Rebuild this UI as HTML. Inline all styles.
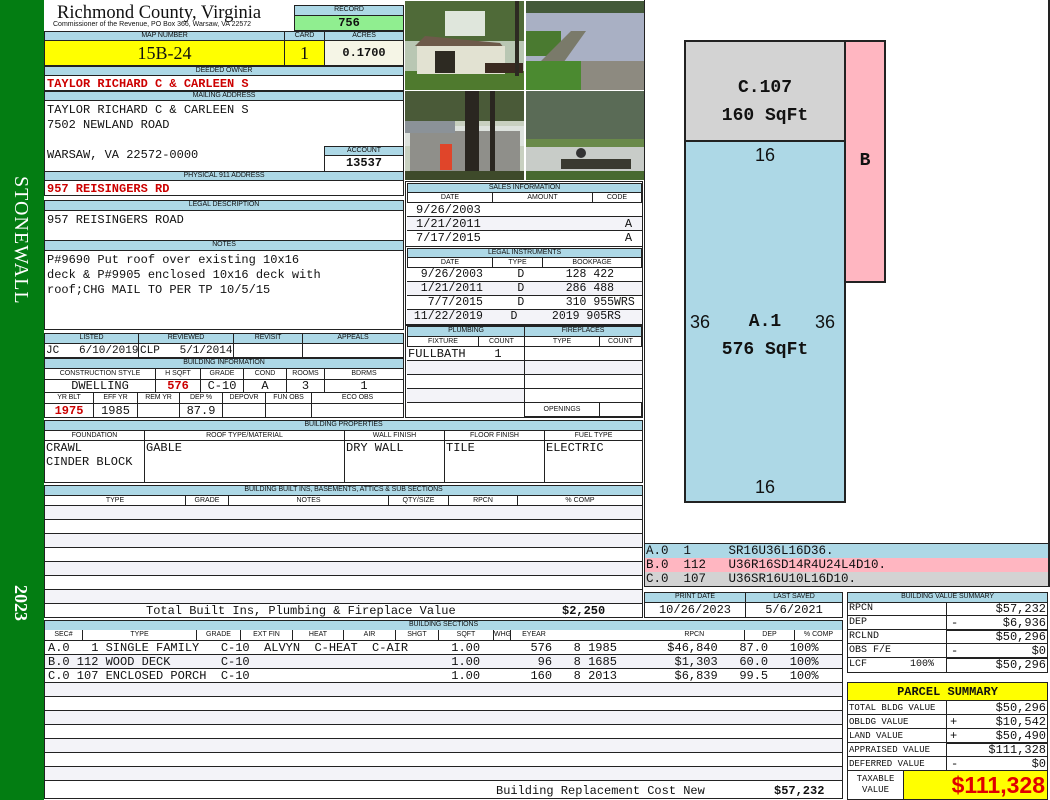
<!DOCTYPE html>
<html><head><meta charset="utf-8">
<style>
*{box-sizing:border-box;margin:0;padding:0}
body{width:1050px;height:800px;position:relative;background:#fff;overflow:hidden;font-family:"Liberation Mono",monospace;color:#111}
div{position:absolute}
.h{background:#add8e6;border:1px solid #222;font:7px/8px "Liberation Sans",sans-serif;text-align:center;color:#111;letter-spacing:-0.1px}
.b{border:1px solid #222;background:#fff}
.m{font-family:"Liberation Mono",monospace;font-size:12px;line-height:14px;white-space:pre}
.r{color:#c00;font-weight:bold}
.l{border-bottom:1px solid #222}
.s{font:7px/10px "Liberation Sans",sans-serif;text-align:center}
.st{background:#f3f3f8}
.bh{top:630px;height:11px;border:1px solid #222;border-top:0;font:7px/10px 'Liberation Sans',sans-serif;text-align:center;background:#fff}
</style></head><body>

<div style="left:0;top:0;width:44px;height:800px;background:#037d12"></div>
<div style="left:6px;top:165px;width:30px;height:150px;color:#fff;font:20px/30px 'Liberation Serif',serif;writing-mode:vertical-rl;text-align:center;letter-spacing:1px">STONEWALL</div>
<div style="left:6px;top:585px;width:30px;height:45px;color:#fff;font:bold 18px/30px 'Liberation Serif',serif;writing-mode:vertical-rl">2023</div>

<div style="left:57px;top:2px;font:18.5px/22px 'Liberation Serif',serif">Richmond County, Virginia</div>
<div style="left:53px;top:21px;font:7px/8px 'Liberation Sans',sans-serif;white-space:nowrap">Commissioner of the Revenue, PO Box 366, Warsaw, VA 22572</div>
<div class="h" style="left:294px;top:5px;width:110px;height:11px">RECORD</div>
<div class="b" style="left:294px;top:15px;width:110px;height:16px;background:#90ee90;font:bold 12px/14px 'Liberation Mono';text-align:center">756</div>

<div class="h" style="left:44px;top:31px;width:241px;height:10px">MAP NUMBER</div>
<div class="h" style="left:284px;top:31px;width:41px;height:10px">CARD</div>
<div class="h" style="left:324px;top:31px;width:80px;height:10px">ACRES</div>
<div class="b" style="left:44px;top:40px;width:241px;height:26px;background:#ffff00;font:18px/24px 'Liberation Serif',serif;text-align:center">15B-24</div>
<div class="b" style="left:284px;top:40px;width:41px;height:26px;background:#ffff00;font:18px/24px 'Liberation Serif',serif;text-align:center">1</div>
<div class="b" style="left:324px;top:40px;width:80px;height:26px;background:#f5f5e6;font:bold 12px/24px 'Liberation Mono';text-align:center">0.1700</div>

<div class="h" style="left:44px;top:66px;width:360px;height:10px">DEEDED OWNER</div>
<div class="b m r" style="left:44px;top:75px;width:360px;height:16px;padding-left:2px;line-height:16px">TAYLOR RICHARD C &amp; CARLEEN S</div>
<div class="h" style="left:44px;top:91px;width:360px;height:10px">MAILING ADDRESS</div>
<div class="b m" style="left:44px;top:100px;width:360px;height:72px;padding:2px 0 0 2px;line-height:15px">TAYLOR RICHARD C &amp; CARLEEN S
7502 NEWLAND ROAD

WARSAW, VA 22572-0000</div>
<div class="h" style="left:324px;top:146px;width:80px;height:10px">ACCOUNT</div>
<div class="b" style="left:324px;top:155px;width:80px;height:17px;font:bold 12px/15px 'Liberation Mono';text-align:center">13537</div>
<div class="h" style="left:44px;top:171px;width:360px;height:10px">PHYSICAL 911 ADDRESS</div>
<div class="b m r" style="left:44px;top:180px;width:360px;height:16px;padding-left:2px;line-height:16px">957 REISINGERS RD</div>

<div class="h" style="left:44px;top:200px;width:360px;height:11px">LEGAL DESCRIPTION</div>
<div class="b m" style="left:44px;top:210px;width:360px;height:31px;padding:2px 0 0 2px">957 REISINGERS ROAD</div>
<div class="h" style="left:44px;top:240px;width:360px;height:11px">NOTES</div>
<div class="b m" style="left:44px;top:250px;width:360px;height:80px;padding:2px 0 0 2px;line-height:15px">P#9690 Put roof over existing 10x16
deck &amp; P#9905 enclosed 10x16 deck with
roof;CHG MAIL TO PER TP 10/5/15</div>

<div class="h" style="left:44px;top:333px;width:95px;height:11px">LISTED</div>
<div class="h" style="left:138px;top:333px;width:96px;height:11px">REVIEWED</div>
<div class="h" style="left:233px;top:333px;width:70px;height:11px">REVISIT</div>
<div class="h" style="left:302px;top:333px;width:102px;height:11px">APPEALS</div>
<div class="b m" style="left:44px;top:343px;width:95px;height:15px;padding-left:1px;font-size:11px">JC   6/10/2019</div>
<div class="b m" style="left:138px;top:343px;width:96px;height:15px;padding-left:1px;font-size:11px">CLP   5/1/2014</div>
<div class="b" style="left:233px;top:343px;width:70px;height:15px"></div>
<div class="b" style="left:302px;top:343px;width:102px;height:15px"></div>

<div class="h" style="left:44px;top:358px;width:360px;height:11px">BUILDING INFORMATION</div>
<div class="b s" style="left:44px;top:368px;width:112px;height:12px;line-height:10px">CONSTRUCTION STYLE</div>
<div class="b s" style="left:155px;top:368px;width:46px;height:12px;line-height:10px">H SQFT</div>
<div class="b s" style="left:200px;top:368px;width:44px;height:12px;line-height:10px">GRADE</div>
<div class="b s" style="left:243px;top:368px;width:44px;height:12px;line-height:10px">COND</div>
<div class="b s" style="left:286px;top:368px;width:39px;height:12px;line-height:10px">ROOMS</div>
<div class="b s" style="left:324px;top:368px;width:80px;height:12px;line-height:10px">BDRMS</div>
<div class="b m" style="left:44px;top:379px;width:112px;height:14px;text-align:center;line-height:12px">DWELLING</div>
<div class="b m r" style="left:155px;top:379px;width:46px;height:14px;text-align:center;line-height:12px">576</div>
<div class="b m" style="left:200px;top:379px;width:44px;height:14px;text-align:center;line-height:12px">C-10</div>
<div class="b m" style="left:243px;top:379px;width:44px;height:14px;text-align:center;line-height:12px">A</div>
<div class="b m" style="left:286px;top:379px;width:39px;height:14px;text-align:center;line-height:12px">3</div>
<div class="b m" style="left:324px;top:379px;width:80px;height:14px;text-align:center;line-height:12px">1</div>
<div class="h" style="left:44px;top:392px;width:50px;height:12px;line-height:10px;background:#fff">YR BLT</div>
<div class="h" style="left:93px;top:392px;width:45px;height:12px;line-height:10px;background:#fff">EFF YR</div>
<div class="h" style="left:137px;top:392px;width:43px;height:12px;line-height:10px;background:#fff">REM YR</div>
<div class="h" style="left:179px;top:392px;width:44px;height:12px;line-height:10px;background:#fff">DEP %</div>
<div class="h" style="left:222px;top:392px;width:44px;height:12px;line-height:10px;background:#fff">DEPOVR</div>
<div class="h" style="left:265px;top:392px;width:47px;height:12px;line-height:10px;background:#fff">FUN OBS</div>
<div class="h" style="left:311px;top:392px;width:93px;height:12px;line-height:10px;background:#fff">ECO OBS</div>
<div class="b m r" style="left:44px;top:403px;width:50px;height:15px;text-align:center">1975</div>
<div class="b m" style="left:93px;top:403px;width:45px;height:15px;text-align:center">1985</div>
<div class="b" style="left:137px;top:403px;width:43px;height:15px"></div>
<div class="b m" style="left:179px;top:403px;width:44px;height:15px;text-align:center">87.9</div>
<div class="b" style="left:222px;top:403px;width:44px;height:15px"></div>
<div class="b" style="left:265px;top:403px;width:47px;height:15px"></div>
<div class="b" style="left:311px;top:403px;width:93px;height:15px"></div>

<div style="left:404px;top:0;width:241px;height:182px;background:#fff;border-right:1px solid #222"></div>
<svg style="position:absolute;left:405px;top:1px" width="119" height="89">
<rect width="119" height="89" fill="#b9c7b3"/><rect y="0" width="119" height="40" fill="#4f6a38"/><rect x="40" y="10" width="40" height="25" fill="#dfe6dc"/>
<rect y="70" width="119" height="19" fill="#4f7a2e"/><polygon points="10,45 20,35 95,42 100,48" fill="#6d5a4a"/><rect x="12" y="45" width="88" height="28" fill="#e2e2d2"/><rect x="30" y="50" width="20" height="22" fill="#2d2a22"/><rect x="80" y="62" width="38" height="10" fill="#3a2a20"/><rect x="110" y="0" width="4" height="75" fill="#2d2a22"/></svg>
<svg style="position:absolute;left:526px;top:1px" width="118" height="89">
<rect width="118" height="89" fill="#9aa6b8"/><rect width="118" height="12" fill="#445a3a"/><rect y="12" width="118" height="50" fill="#a9b0c4"/><rect y="30" width="35" height="25" fill="#4a7a30"/><polygon points="10,65 45,30 60,30 35,65" fill="#7a7a6a"/><rect y="60" width="60" height="29" fill="#4b8a30"/><rect x="55" y="60" width="63" height="29" fill="#8d8a80"/></svg>
<svg style="position:absolute;left:405px;top:91px" width="119" height="89">
<rect width="119" height="89" fill="#c8d0c0"/><rect width="119" height="30" fill="#4a5a38"/><rect x="0" y="35" width="119" height="20" fill="#dde2dd"/><rect x="5" y="40" width="110" height="40" fill="#8f8f8a"/><rect x="0" y="30" width="50" height="12" fill="#8b9298"/><rect x="35" y="53" width="12" height="26" fill="#e0452a"/><rect x="60" y="0" width="14" height="89" fill="#2a2620"/><rect x="85" y="0" width="5" height="89" fill="#2a2620"/><rect y="80" width="119" height="9" fill="#3e4a2a"/></svg>
<svg style="position:absolute;left:526px;top:91px" width="118" height="89">
<rect width="118" height="89" fill="#6e7e6a"/><rect width="118" height="48" fill="#5a6b56"/><rect y="48" width="118" height="8" fill="#6a8a4a"/><rect y="56" width="118" height="25" fill="#c8ccc8"/><rect x="35" y="68" width="70" height="10" fill="#3a3a30"/><rect y="80" width="118" height="9" fill="#486a30"/><circle cx="55" cy="62" r="5" fill="#333"/></svg>

<div class="b" style="left:405px;top:181px;width:238px;height:66px"></div>
<div class="h" style="left:407px;top:183px;width:235px;height:10px">SALES INFORMATION</div>
<div class="b s" style="left:407px;top:192px;width:86px;height:11px;line-height:9px">DATE</div>
<div class="b s" style="left:492px;top:192px;width:101px;height:11px;line-height:9px">AMOUNT</div>
<div class="b s" style="left:592px;top:192px;width:50px;height:11px;line-height:9px">CODE</div>
<div class="m l" style="left:407px;top:203px;width:235px;height:14px;padding-left:9px">9/26/2003</div>
<div class="m l st" style="left:407px;top:217px;width:235px;height:14px;padding-left:9px">1/21/2011                    A</div>
<div class="m" style="left:407px;top:231px;width:235px;height:14px;padding-left:9px">7/17/2015                    A</div>

<div class="b" style="left:405px;top:246px;width:238px;height:79px"></div>
<div class="h" style="left:407px;top:248px;width:235px;height:10px">LEGAL INSTRUMENTS</div>
<div class="b s" style="left:407px;top:257px;width:86px;height:11px;line-height:9px">DATE</div>
<div class="b s" style="left:492px;top:257px;width:51px;height:11px;line-height:9px">TYPE</div>
<div class="b s" style="left:542px;top:257px;width:100px;height:11px;line-height:9px">BOOKPAGE</div>
<div class="m l" style="left:407px;top:268px;width:235px;height:14px;font-size:11.5px">  9/26/2003     D      128 422</div>
<div class="m l st" style="left:407px;top:282px;width:235px;height:14px;font-size:11.5px">  1/21/2011     D      286 488</div>
<div class="m l" style="left:407px;top:296px;width:235px;height:14px;font-size:11.5px">   7/7/2015     D      310 955WRS</div>
<div class="m st" style="left:407px;top:310px;width:235px;height:14px;font-size:11.5px"> 11/22/2019    D     2019 905RS</div>

<div class="b" style="left:405px;top:325px;width:238px;height:93px"></div>
<div class="h" style="left:407px;top:326px;width:118px;height:11px">PLUMBING</div>
<div class="h" style="left:524px;top:326px;width:118px;height:11px">FIREPLACES</div>
<div class="b s" style="left:407px;top:336px;width:72px;height:11px;line-height:9px">FIXTURE</div>
<div class="b s" style="left:478px;top:336px;width:47px;height:11px;line-height:9px">COUNT</div>
<div class="b s" style="left:524px;top:336px;width:76px;height:11px;line-height:9px">TYPE</div>
<div class="b s" style="left:599px;top:336px;width:43px;height:11px;line-height:9px">COUNT</div>
<div class="m l" style="left:407px;top:347px;width:118px;height:14px;padding-left:1px">FULLBATH    1</div>
<div class="l st" style="left:407px;top:361px;width:118px;height:14px"></div>
<div class="l" style="left:407px;top:375px;width:118px;height:14px"></div>
<div class="l st" style="left:407px;top:389px;width:118px;height:14px"></div>
<div style="left:524px;top:347px;width:1px;height:70px;background:#222"></div>
<div class="l" style="left:525px;top:347px;width:117px;height:14px"></div>
<div class="l st" style="left:525px;top:361px;width:117px;height:14px"></div>
<div class="l" style="left:525px;top:375px;width:117px;height:14px"></div>
<div class="b s" style="left:524px;top:402px;width:76px;height:15px;line-height:13px">OPENINGS</div>
<div class="b" style="left:599px;top:402px;width:43px;height:15px"></div>

<div class="b" style="left:44px;top:420px;width:599px;height:63px"></div>
<div class="h" style="left:44px;top:420px;width:599px;height:11px">BUILDING PROPERTIES</div>
<div class="b s" style="left:44px;top:430px;width:101px;height:11px;line-height:9px">FOUNDATION</div>
<div class="b s" style="left:144px;top:430px;width:201px;height:11px;line-height:9px">ROOF TYPE/MATERIAL</div>
<div class="b s" style="left:344px;top:430px;width:101px;height:11px;line-height:9px">WALL FINISH</div>
<div class="b s" style="left:444px;top:430px;width:101px;height:11px;line-height:9px">FLOOR FINISH</div>
<div class="b s" style="left:544px;top:430px;width:99px;height:11px;line-height:9px">FUEL TYPE</div>
<div class="b m" style="left:44px;top:440px;width:101px;height:43px;padding-left:1px">CRAWL
CINDER BLOCK</div>
<div class="b m" style="left:144px;top:440px;width:201px;height:43px;padding-left:1px">GABLE</div>
<div class="b m" style="left:344px;top:440px;width:101px;height:43px;padding-left:1px">DRY WALL</div>
<div class="b m" style="left:444px;top:440px;width:101px;height:43px;padding-left:1px">TILE</div>
<div class="b m" style="left:544px;top:440px;width:99px;height:43px;padding-left:1px">ELECTRIC</div>

<div class="b" style="left:44px;top:485px;width:599px;height:133px"></div>
<div class="h" style="left:44px;top:485px;width:599px;height:11px">BUILDING BUILT INS, BASEMENTS, ATTICS &amp; SUB SECTIONS</div>
<div class="b s" style="left:44px;top:495px;width:142px;height:11px;line-height:9px">TYPE</div>
<div class="b s" style="left:185px;top:495px;width:44px;height:11px;line-height:9px">GRADE</div>
<div class="b s" style="left:228px;top:495px;width:161px;height:11px;line-height:9px">NOTES</div>
<div class="b s" style="left:388px;top:495px;width:61px;height:11px;line-height:9px">QTY/SIZE</div>
<div class="b s" style="left:448px;top:495px;width:70px;height:11px;line-height:9px">RPCN</div>
<div class="b s" style="left:517px;top:495px;width:126px;height:11px;line-height:9px">% COMP</div>
<div class="l st" style="left:45px;top:506px;width:597px;height:14px"></div>
<div class="l" style="left:45px;top:520px;width:597px;height:14px"></div>
<div class="l st" style="left:45px;top:534px;width:597px;height:14px"></div>
<div class="l" style="left:45px;top:548px;width:597px;height:14px"></div>
<div class="l st" style="left:45px;top:562px;width:597px;height:14px"></div>
<div class="l" style="left:45px;top:576px;width:597px;height:14px"></div>
<div class="l st" style="left:45px;top:590px;width:597px;height:14px"></div>
<div class="m" style="left:146px;top:604px;line-height:14px">Total Built Ins, Plumbing &amp; Fireplace Value</div>
<div class="m" style="left:562px;top:604px;font-weight:bold;line-height:14px">$2,250</div>

<div class="b" style="left:44px;top:620px;width:799px;height:179px"></div>
<div class="h" style="left:44px;top:620px;width:799px;height:11px">BUILDING SECTIONS</div>
<div class="bh" style="left:44px;width:39px">SEC#</div>
<div class="bh" style="left:82px;width:115px">TYPE</div>
<div class="bh" style="left:196px;width:45px">GRADE</div>
<div class="bh" style="left:240px;width:53px">EXT FIN</div>
<div class="bh" style="left:292px;width:52px">HEAT</div>
<div class="bh" style="left:343px;width:53px">AIR</div>
<div class="bh" style="left:395px;width:44px">SHGT</div>
<div class="bh" style="left:438px;width:56px">SQFT</div>
<div class="bh" style="left:493px;width:18px">WHGT</div>
<div class="bh" style="left:510px;width:48px">EYEAR</div>
<div class="bh" style="left:557px;width:188px;border-left:0">&nbsp;&nbsp;&nbsp;&nbsp;&nbsp;&nbsp;&nbsp;&nbsp;&nbsp;&nbsp;&nbsp;&nbsp;&nbsp;&nbsp;&nbsp;&nbsp;&nbsp;&nbsp;&nbsp;&nbsp;&nbsp;&nbsp;&nbsp;&nbsp;&nbsp;&nbsp;&nbsp;&nbsp;&nbsp;&nbsp;&nbsp;&nbsp;&nbsp;&nbsp;&nbsp;&nbsp;&nbsp;&nbsp;&nbsp;&nbsp;&nbsp;&nbsp;&nbsp;&nbsp;&nbsp;RPCN</div>
<div class="bh" style="left:744px;width:51px">DEP</div>
<div class="bh" style="left:794px;width:49px">% COMP</div>
<div class="m l" style="left:45px;top:641px;width:797px;height:14px;padding-left:3px">A.0   1 SINGLE FAMILY   C-10  ALVYN  C-HEAT  C-AIR      1.00       576   8 1985       $46,840   87.0   100%</div>
<div class="m l st" style="left:45px;top:655px;width:797px;height:14px;padding-left:3px">B.0 112 WOOD DECK       C-10                            1.00        96   8 1685        $1,303   60.0   100%</div>
<div class="m l" style="left:45px;top:669px;width:797px;height:14px;padding-left:3px">C.0 107 ENCLOSED PORCH  C-10                            1.00       160   8 2013        $6,839   99.5   100%</div>
<div class="l st" style="left:45px;top:683px;width:797px;height:14px"></div>
<div class="l" style="left:45px;top:697px;width:797px;height:14px"></div>
<div class="l st" style="left:45px;top:711px;width:797px;height:14px"></div>
<div class="l" style="left:45px;top:725px;width:797px;height:14px"></div>
<div class="l st" style="left:45px;top:739px;width:797px;height:14px"></div>
<div class="l" style="left:45px;top:753px;width:797px;height:14px"></div>
<div class="l st" style="left:45px;top:767px;width:797px;height:14px"></div>
<div class="m" style="left:496px;top:784px">Building Replacement Cost New</div>
<div class="m" style="left:774px;top:784px;font-weight:bold">$57,232</div>

<div style="left:644px;top:0;width:406px;height:543px;border-left:1px solid #222;border-right:2px solid #222;background:#fff"></div>
<div style="left:684px;top:40px;width:162px;height:102px;background:#d3d3d3;border:2px solid #222"></div>
<div style="left:684px;top:140px;width:162px;height:363px;background:#add8e6;border:2px solid #222"></div>
<div style="left:844px;top:40px;width:42px;height:243px;background:#ffb6c1;border:2px solid #222"></div>
<div style="left:684px;top:76px;width:162px;text-align:center;font:bold 18px/24px 'Liberation Mono'">C.107</div>
<div style="left:684px;top:104px;width:162px;text-align:center;font:bold 18px/24px 'Liberation Mono'">160 SqFt</div>
<div style="left:684px;top:144px;width:162px;text-align:center;font:18px/22px 'Liberation Sans'">16</div>
<div style="left:844px;top:150px;width:42px;text-align:center;font:bold 18px/22px 'Liberation Mono'">B</div>
<div style="left:690px;top:311px;font:18px/22px 'Liberation Sans'">36</div>
<div style="left:815px;top:311px;font:18px/22px 'Liberation Sans'">36</div>
<div style="left:684px;top:310px;width:162px;text-align:center;font:bold 18px/24px 'Liberation Mono'">A.1</div>
<div style="left:684px;top:338px;width:162px;text-align:center;font:bold 18px/24px 'Liberation Mono'">576 SqFt</div>
<div style="left:684px;top:476px;width:162px;text-align:center;font:18px/22px 'Liberation Sans'">16</div>

<div style="left:644px;top:543px;width:406px;height:44px;border:1px solid #222;border-right:2px solid #222"></div>
<div class="m" style="left:645px;top:544px;width:403px;height:14px;background:#add8e6;font-size:12.5px;padding-left:1px">A.0  1     SR16U36L16D36.</div>
<div class="m" style="left:645px;top:558px;width:403px;height:14px;background:#ffb6c1;font-size:12.5px;padding-left:1px">B.0  112   U36R16SD14R4U24L4D10.</div>
<div class="m" style="left:645px;top:572px;width:403px;height:14px;background:#d3d3d3;font-size:12.5px;padding-left:1px">C.0  107   U36SR16U10L16D10.</div>

<div class="h" style="left:644px;top:592px;width:102px;height:11px">PRINT DATE</div>
<div class="h" style="left:745px;top:592px;width:98px;height:11px">LAST SAVED</div>
<div class="b m" style="left:644px;top:602px;width:102px;height:16px;text-align:center;line-height:14px">10/26/2023</div>
<div class="b m" style="left:745px;top:602px;width:98px;height:16px;text-align:center;line-height:14px">5/6/2021</div>

<div class="h" style="left:847px;top:592px;width:201px;height:11px">BUILDING VALUE SUMMARY</div>
<div class="b" style="left:847px;top:602px;width:201px;height:71px"></div>
<div style="left:847px;top:602px;width:201px;font:10px/14px 'Liberation Mono';">
<div class="l" style="position:relative;height:14px;padding-left:2px">RPCN</div><div class="l" style="position:relative;height:14px;padding-left:2px">DEP</div><div class="l" style="position:relative;height:14px;padding-left:2px">RCLND</div><div class="l" style="position:relative;height:14px;padding-left:2px">OBS F/E</div><div style="position:relative;height:14px;padding-left:2px">LCF<span style="position:absolute;left:63px">100%</span></div></div>
<div style="left:946px;top:602px;width:1px;height:71px;background:#222"></div>
<div class="m" style="left:947px;top:602px;width:99px;text-align:right;line-height:14px">$57,232
$6,936
$50,296
$0
$50,296</div>
<div class="m" style="left:951px;top:616px">-</div><div class="m" style="left:951px;top:644px">-</div>
<div style="left:947px;top:629px;width:101px;height:2px;background:#222"></div>
<div style="left:947px;top:657px;width:101px;height:2px;background:#222"></div>

<div class="b" style="left:847px;top:682px;width:201px;height:118px"></div>
<div style="left:848px;top:683px;width:199px;height:18px;background:#ffff00;border-bottom:1px solid #222;text-align:center;font:bold 12px/18px 'Liberation Mono'">PARCEL SUMMARY</div>
<div style="left:848px;top:701px;width:99px;font:9px/14px 'Liberation Mono'">
<div class="l" style="position:relative;height:14px;padding-left:1px">TOTAL BLDG VALUE</div><div class="l" style="position:relative;height:14px;padding-left:1px">OBLDG VALUE</div><div class="l" style="position:relative;height:14px;padding-left:1px">LAND VALUE</div><div class="l" style="position:relative;height:14px;padding-left:1px">APPRAISED VALUE</div><div class="l" style="position:relative;height:14px;padding-left:1px">DEFERRED VALUE</div></div>
<div style="left:946px;top:701px;width:1px;height:70px;background:#222"></div>
<div style="left:947px;top:701px;width:100px;">
<div class="l" style="position:relative;height:14px"></div><div class="l" style="position:relative;height:14px"></div><div class="l" style="position:relative;height:14px"></div><div class="l" style="position:relative;height:14px"></div><div class="l" style="position:relative;height:14px"></div></div>
<div class="m" style="left:947px;top:701px;width:99px;text-align:right;line-height:14px">$50,296
$10,542
$50,490
$111,328
$0</div>
<div class="m" style="left:950px;top:715px">+</div><div class="m" style="left:950px;top:729px">+</div><div class="m" style="left:951px;top:757px">-</div>
<div style="left:947px;top:742px;width:100px;height:2px;background:#222"></div>
<div style="left:848px;top:771px;width:55px;height:28px;font:9px/11px 'Liberation Mono';text-align:center;padding-top:3px">TAXABLE<br>VALUE</div>
<div style="left:903px;top:771px;width:144px;height:28px;background:#ffff00;border-left:1px solid #222;text-align:right;color:#e00000;font:bold 23px/28px 'Liberation Sans',sans-serif;padding-right:2px">$111,328</div>
</body></html>
